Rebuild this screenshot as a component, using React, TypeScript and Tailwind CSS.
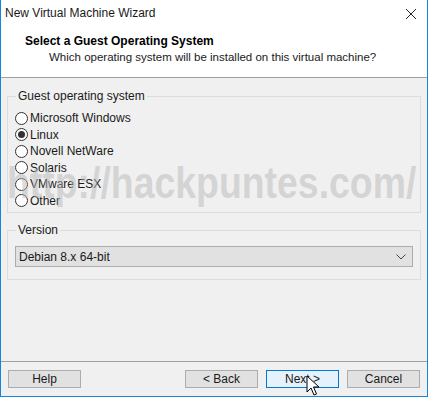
import React, { useState } from 'react';

const systems = ['Microsoft Windows', 'Linux', 'Novell NetWare', 'Solaris', 'VMware ESX', 'Other'];

const Radio: React.FC<{ label: string; checked: boolean; onPick: () => void }> = ({ label, checked, onPick }) => (
  <label className="flex items-center h-[16.5px] cursor-default" onClick={onPick}>
    <span className="w-[13px] h-[13px] rounded-full border border-[#333] bg-white flex items-center justify-center">
      {checked && <span className="w-[7px] h-[7px] rounded-full bg-[#333]" />}
    </span>
    <span className="ml-[2px] text-[12px] text-[#1a1a1a]">{label}</span>
  </label>
);

const Btn: React.FC<{ label: string; primary?: boolean }> = ({ label, primary }) => (
  <button
    className={`w-[73px] h-[18px] text-[12px] leading-none text-[#1a1a1a] border ${
      primary ? 'border-[#0078d7] bg-[#e5f1fb]' : 'border-[#adadad] bg-[#e1e1e1]'
    }`}
  >
    {label}
  </button>
);

const App: React.FC = () => {
  const [os, setOs] = useState('Linux');

  return (
    <div
      className="relative w-[428px] h-[397px] bg-[#f0f0f0] border-x border-b border-[#1883d7] overflow-hidden flex flex-col"
      style={{ fontFamily: '"Liberation Sans", Arial, sans-serif' }}
    >
      {/* header */}
      <div className="bg-white h-[78px] border-b border-[#a0a0a0] shrink-0">
        <div className="flex items-center justify-between h-[26px] pl-[4px] pr-[10px]">
          <span className="text-[12px] text-[#1a1a1a]">New Virtual Machine Wizard</span>
          <svg width="12" height="12" viewBox="0 0 12 12" className="mt-[1px]">
            <path d="M1 1 L11 11 M11 1 L1 11" stroke="#222" strokeWidth="1" />
          </svg>
        </div>
        <div className="pl-[24px] pt-[8px] text-[12px] font-bold text-black leading-[14px]">Select a Guest Operating System</div>
        <div className="pl-[48px] pt-[2px] text-[11.5px] text-[#1a1a1a] leading-[14px]">
          Which operating system will be installed on this virtual machine?
        </div>
      </div>

      {/* body */}
      <div className="flex-1 px-[6px] pt-[12px]">
        <fieldset className="border border-[#dcdcdc] px-[7px] pb-[6px] h-[123px]">
          <legend className="px-[2px] ml-[1px] text-[12px] text-[#1a1a1a] leading-[12px]">Guest operating system</legend>
          <div className="flex flex-col pt-[8px]">
            {systems.map((s) => (
              <Radio key={s} label={s} checked={os === s} onPick={() => setOs(s)} />
            ))}
          </div>
        </fieldset>

        <fieldset className="border border-[#dcdcdc] px-[7px] mt-[11px] h-[56px]">
          <legend className="px-[2px] ml-[1px] text-[12px] text-[#1a1a1a] leading-[12px]">Version</legend>
          <div className="mt-[10px] h-[21px] border border-[#adadad] bg-[#e1e1e1] flex items-center justify-between pl-[3px] pr-[6px]">
            <span className="text-[12px] text-[#1a1a1a]">Debian 8.x 64-bit</span>
            <svg width="10" height="6" viewBox="0 0 10 6">
              <path d="M0.5 0.5 L5 5 L9.5 0.5" fill="none" stroke="#444" strokeWidth="1" />
            </svg>
          </div>
        </fieldset>
      </div>

      {/* footer */}
      <div className="h-[35px] border-t border-[#a0a0a0] flex items-start pt-[8px] px-[7px] shrink-0">
        <Btn label="Help" />
        <div className="flex-1" />
        <div className="flex gap-[8px]">
          <Btn label="< Back" />
          <Btn label="Next >" primary />
          <Btn label="Cancel" />
        </div>
      </div>

      {/* watermark */}
      <div
        className="absolute left-[6px] top-[161px] text-[44px] font-bold text-[#b8b8b8]/50 leading-none whitespace-nowrap pointer-events-none origin-left scale-x-[0.85]"
      >
        http://hackpuntes.com/
      </div>

      {/* mouse cursor */}
      <svg className="absolute left-[305px] top-[375px]" width="14" height="22" viewBox="0 0 14 22">
        <path d="M1 1 L1 17 L5 13 L8 20 L10.5 19 L7.5 12 L13 12 Z" fill="white" stroke="black" strokeWidth="1" />
      </svg>
    </div>
  );
};

export default App;
